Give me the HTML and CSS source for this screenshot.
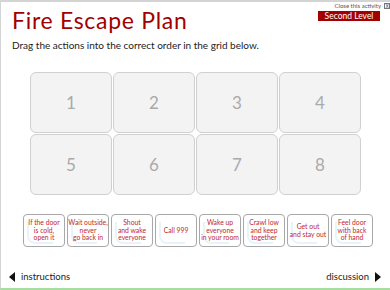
FILE: index.html
```html
<!DOCTYPE html>
<html lang="en">
<head>
  <meta charset="UTF-8">
  <title>Fire Escape Plan</title>
  <link rel="stylesheet" href="styles.css">
</head>
<body>
  <div class="activity">
    <div class="top">
      <h1 class="title">Fire Escape Plan</h1>
      <div class="meta">
        <a class="close" href="#close">Close this activity <span class="close-x">X</span></a>
        <div class="level">Second Level</div>
      </div>
    </div>

    <p class="intro">Drag the actions into the correct order in the grid below.</p>

    <div class="grid">
      <div class="slot">1</div>
      <div class="slot">2</div>
      <div class="slot">3</div>
      <div class="slot">4</div>
      <div class="slot">5</div>
      <div class="slot">6</div>
      <div class="slot">7</div>
      <div class="slot">8</div>
    </div>

    <ul class="cards">
      <li class="card">If the door<br>is cold,<br>open it</li>
      <li class="card">Wait outside,<br>never<br>go back in</li>
      <li class="card">Shout<br>and wake<br>everyone</li>
      <li class="card">Call 999</li>
      <li class="card">Wake up<br>everyone<br>in your room</li>
      <li class="card">Crawl low<br>and keep<br>together</li>
      <li class="card">Get out<br>and stay out</li>
      <li class="card">Feel door<br>with back<br>of hand</li>
    </ul>

    <div class="nav">
      <a class="nav-link nav-prev" href="#instructions">instructions</a>
      <a class="nav-link nav-next" href="#discussion">discussion</a>
    </div>
  </div>
</body>
</html>
```

FILE: styles.css
```css
* {
  box-sizing: border-box;
}

body {
  margin: 0;
  background: #fff;
  font-family: "Lato", "Liberation Sans", sans-serif;
}

.activity {
  width: 390px;
  height: 290px;
  display: flex;
  flex-direction: column;
  border-top: 2px solid #d4d4d4;
  border-left: 1px solid #d4d4d4;
  border-bottom: 2px solid #a6dea0;
}

.top {
  display: flex;
  justify-content: space-between;
  align-items: flex-start;
}

.title {
  margin: 5px 0 0 11px;
  font-size: 23px;
  font-weight: normal;
  letter-spacing: 0.7px;
  line-height: 26px;
  color: #a20000;
}

.meta {
  display: flex;
  flex-direction: column;
  align-items: flex-end;
}

.close {
  display: flex;
  align-items: center;
  gap: 3px;
  font-size: 6px;
  line-height: 8px;
  color: #555;
  text-decoration: none;
}

.close-x {
  display: inline-block;
  width: 6px;
  height: 6px;
  border: 1px solid #777;
  font-size: 5px;
  line-height: 4px;
  text-align: center;
  color: #333;
}

.level {
  width: 62px;
  height: 10px;
  margin: 1px 10px 0 0;
  background: #a20000;
  color: #fff;
  font-size: 8.5px;
  line-height: 10px;
  text-align: center;
}

.intro {
  margin: 6px 0 0 11px;
  font-size: 10px;
  line-height: 12px;
  color: #222;
}

.grid {
  display: grid;
  grid-template-columns: repeat(4, 82px);
  grid-auto-rows: 61px;
  gap: 1px;
  margin: 21px 0 0 29px;
}

.slot {
  display: flex;
  align-items: center;
  justify-content: center;
  background: #f3f3f3;
  border: 1px solid #d0d0d0;
  border-radius: 6px;
  color: #aaa;
  font-size: 17px;
}

.cards {
  display: flex;
  gap: 2px;
  list-style: none;
  margin: 19px 0 0 22px;
  padding: 0;
}

.card {
  position: relative;
  z-index: 0;
  width: 42px;
  height: 33px;
  display: flex;
  align-items: center;
  justify-content: center;
  background: #fff;
  border: 1px solid #a8a8a8;
  border-radius: 4px;
  color: #c0282e;
  font-size: 6.8px;
  line-height: 7.5px;
  text-align: center;
}

.card::before {
  content: '';
  position: absolute;
  z-index: -1;
  left: 3px;
  top: 7px;
  width: 24px;
  bottom: 2px;
  border-left: 2px solid #e8f4fc;
  border-bottom: 2px solid #e8f4fc;
  border-radius: 0 0 0 8px;
}

.nav {
  display: flex;
  justify-content: space-between;
  margin-top: auto;
  padding: 0 9px 4px 8px;
}

.nav-link {
  display: flex;
  align-items: center;
  gap: 6px;
  color: #222;
  font-size: 9.5px;
  line-height: 14px;
  text-decoration: none;
}

.nav-prev::before,
.nav-next::after {
  content: '';
  width: 0;
  height: 0;
  border-top: 5px solid transparent;
  border-bottom: 5px solid transparent;
}

.nav-prev::before {
  border-right: 6px solid #111;
}

.nav-next::after {
  border-left: 6px solid #111;
}
```
